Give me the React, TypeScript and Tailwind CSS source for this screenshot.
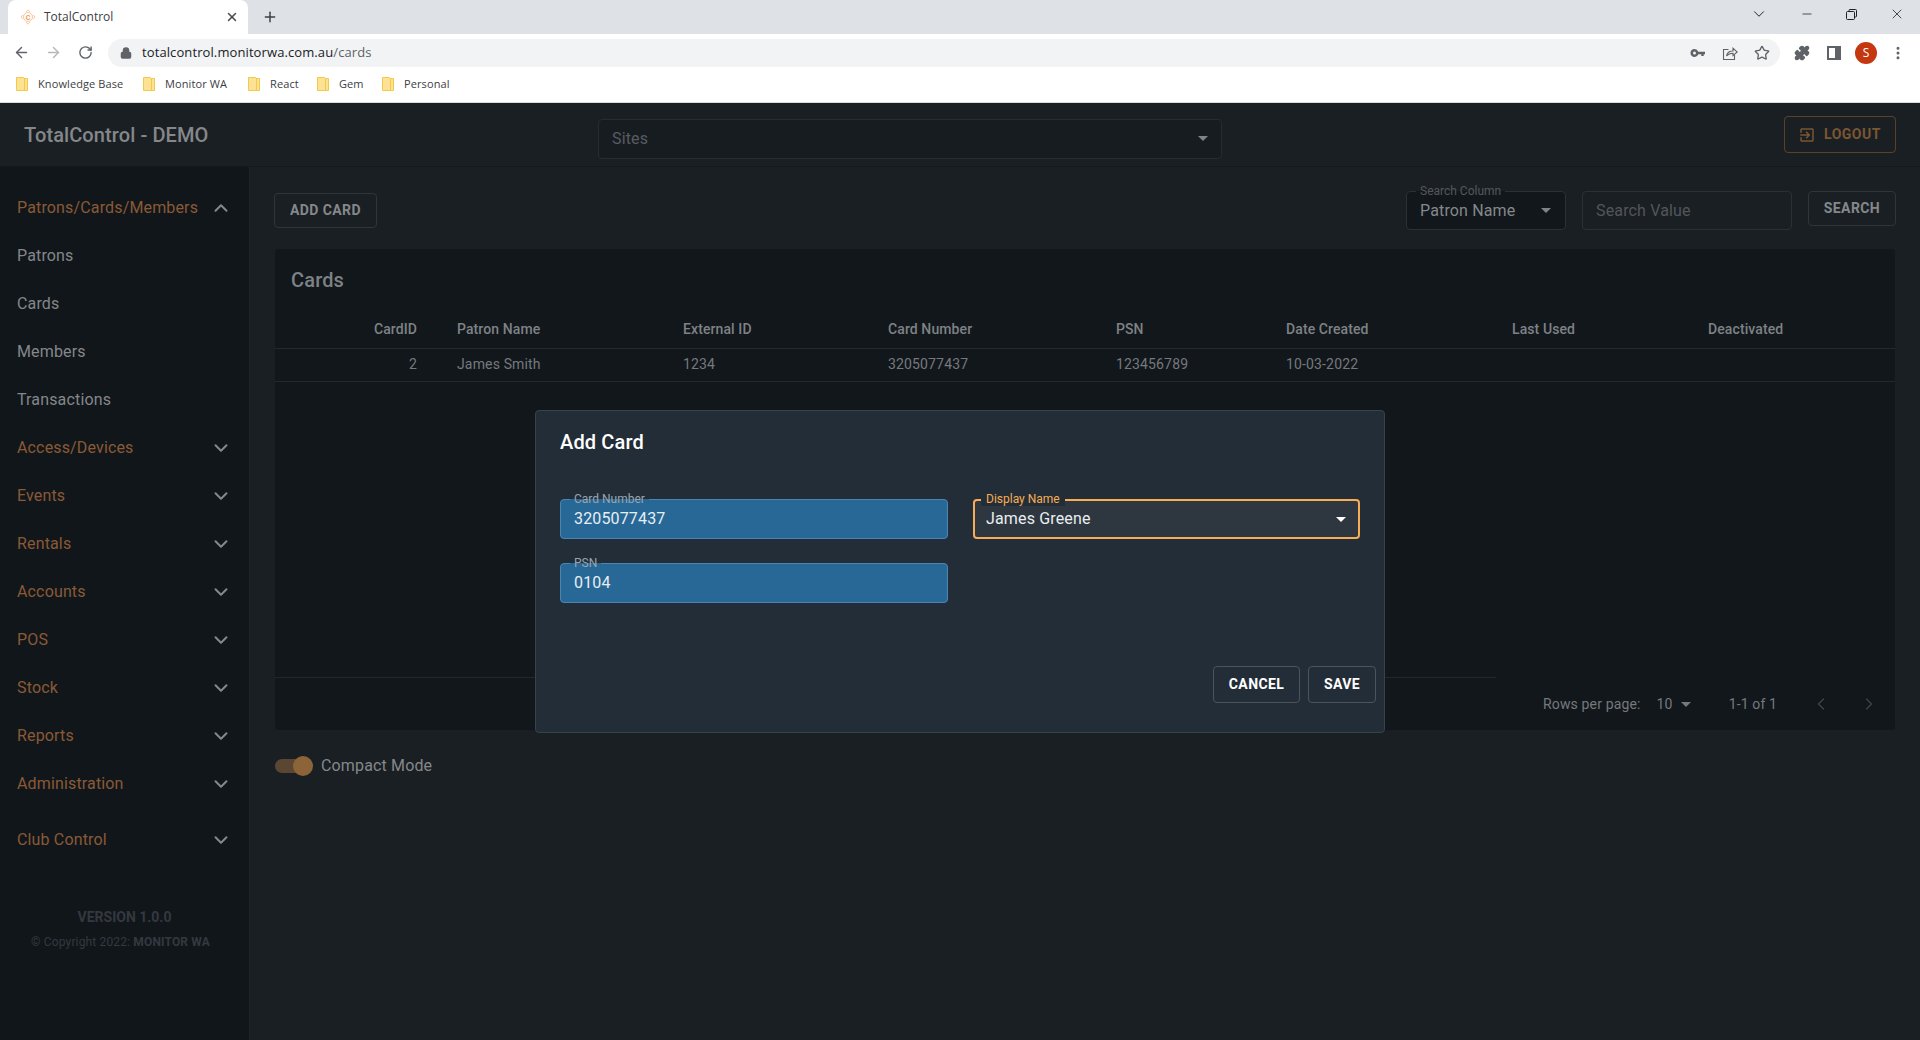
import React from "react";
import { ArrowLeft, ArrowRight, RotateCw, Lock, Star, ChevronUp, ChevronDown, ChevronLeft, ChevronRight, Plus, X, Minus, EllipsisVertical, Puzzle } from "lucide-react";

const Caret = ({ className = "" }: { className?: string }) => (
  <svg width="10" height="5" viewBox="0 0 10 5" className={className}><path d="M0 0l5 5 5-5z" fill="currentColor" /></svg>
);

const Folder = () => (
  <svg width="12" height="14" viewBox="0 0 12 14" className="shrink-0">
    <path d="M.5.5h7l1 1v12h-8z M8.5 1.5h3v12h-3z" fill="#fde293" stroke="#f2c94c" strokeWidth="1" />
  </svg>
);

const Favicon = () => (
  <svg width="16" height="16" viewBox="0 0 16 16" fill="none" stroke="#f8c9a0" strokeWidth="1">
    <circle cx="8" cy="8" r="4.5" />
    <path d="M8 .8l2 2.2M8 .8L6 3M8 15.2l2-2.2M8 15.2L6 13M.8 8L3 6M.8 8L3 10M15.2 8L13 6M15.2 8L13 10" />
    <text x="8" y="10.5" textAnchor="middle" fontSize="7" fontWeight="700" fill="#ee9a4d" stroke="none" fontFamily="Roboto">C</text>
  </svg>
);

const KeyIcon = () => (
  <svg width="16" height="16" viewBox="0 0 16 16" fill="#5f6368">
    <path fillRule="evenodd" d="M4.5 4a4 4 0 013.8 2.7H15v2.6h-1.3V11h-2.4V9.3H8.300A4 4 0 114.500 4zm0 2.500a1.500 1.500 0 100 3 1.500 1.500 0 000-3z" />
  </svg>
);

const ShareIcon = () => (
  <svg width="16" height="16" viewBox="0 0 16 16" fill="none" stroke="#5f6368" strokeWidth="1.100">
    <path d="M6.500 4.500H1.500v10h11V10" />
    <path d="M4.500 11c.6-3.200 3-5 6.500-5V3.200L15.200 7 11 10.600V8.200c-2.700 0-4.900.8-6.500 2.800z" />
  </svg>
);

const bookmarks = [
  ["Knowledge Base", "w-[127px]"],
  ["Monitor WA", "w-[105px]"],
  ["React", "w-[69px]"],
  ["Gem", "w-[65px]"],
  ["Personal", "w-[80px]"],
];

function BrowserChrome() {
  return (
    <div className="shrink-0 font-['Open_Sans','Noto_Sans',sans-serif] text-[#3c4043]">
      <div className="h-[34px] bg-[#dee1e6] flex items-end pl-2">
        <div className="w-[240px] h-[34px] bg-white rounded-t-lg flex items-center pl-3 pr-[9px]">
          <Favicon />
          <span className="ml-[8px] text-[12px] flex-1 text-[#3c4043]">TotalControl</span>
          <X size={14} strokeWidth={2.5} className="text-[#45484c]" />
        </div>
        <Plus size={16} strokeWidth={2.2} className="ml-[14px] mb-[9px] text-[#3c4043]" />
        <div className="ml-auto h-[28px] self-start flex items-center text-[#202124]">
          <ChevronDown size={18} strokeWidth={1.3} className="mr-[32px]" />
          <Minus size={14} strokeWidth={1.3} className="mr-[32px]" />
          <svg width="11" height="11" viewBox="0 0 11 11" fill="none" stroke="#202124" className="mr-[32px]"><rect x=".5" y="2.5" width="8" height="8" rx="1" /><path d="M3 2.500V1.500a1 1 0 011-1h5.500a1 1 0 011 1V7a1 1 0 01-1 1h-1" /></svg>
          <X size={16} strokeWidth={1.2} className="mr-[15px]" />
        </div>
      </div>
      <div className="h-[37px] bg-white flex items-center">
        <ArrowLeft size={17} strokeWidth={2} className="ml-[13px] text-[#5f6368]" />
        <ArrowRight size={17} strokeWidth={2} className="ml-[15px] text-[#b5b8bb]" />
        <RotateCw size={15} strokeWidth={2.2} className="ml-[16px] text-[#5f6368]" />
        <div className="ml-[15px] w-[1672px] h-[28px] rounded-full bg-[#f1f3f4] flex items-center pl-3 pr-[10px]">
          <Lock size={12} strokeWidth={3} className="text-[#5f6368] fill-[#5f6368]" />
          <span className="ml-[10px] text-[13px] text-[#202124] tracking-[0.1px]">totalcontrol.monitorwa.com.au<span className="text-[#5f6368]">/cards</span></span>
          <div className="ml-auto flex items-center gap-[16px] text-[#5f6368]">
            <KeyIcon />
            <ShareIcon />
            <Star size={16} strokeWidth={2} />
          </div>
        </div>
        <Puzzle size={16} className="ml-[14px] text-[#5f6368] fill-[#5f6368]" />
        <svg width="14" height="14" viewBox="0 0 14 14" className="ml-[17px]"><rect x="1" y="1" width="12" height="12" fill="none" stroke="#5f6368" strokeWidth="2" /><rect x="8" y="1" width="5" height="12" fill="#5f6368" /></svg>
        <div className="ml-[14px] w-[22px] h-[22px] rounded-full bg-[#c5370e] text-white text-[12px] flex items-center justify-center">S</div>
        <EllipsisVertical size={16} strokeWidth={2.5} className="ml-[13px] text-[#5f6368]" />
      </div>
      <div className="h-[32px] bg-white border-b border-[#d8dadd] flex items-center pl-[16px] pb-[5px] text-[11px] tracking-[0.1px] text-[#3c4043]">
        {bookmarks.map(([b, w]) => (
          <div key={b} className={`${w} flex items-center gap-[10px]`}>
            <Folder />
            <span>{b}</span>
          </div>
        ))}
      </div>
    </div>
  );
}

const navTop = ["Patrons", "Cards", "Members", "Transactions"];
const navGroups = ["Access/Devices", "Events", "Rentals", "Accounts", "POS", "Stock", "Reports", "Administration"];

function NavRow({ label, kind }: { label: string; kind: "open" | "group" | "leaf" }) {
  return (
    <div className={`h-12 flex items-center justify-between pl-[17px] pr-[17px] text-[16px] tracking-[0.15px] ${kind === "leaf" ? "text-[#84878a]" : "text-[#8a5a36]"}`}>
      <span>{label}</span>
      {kind === "open" && <ChevronUp size={22} strokeWidth={2.2} className="text-[#85888b]" />}
      {kind === "group" && <ChevronDown size={22} strokeWidth={2.2} className="text-[#85888b]" />}
    </div>
  );
}

function Sidebar() {
  return (
    <aside className="w-[250px] shrink-0 bg-[#11161b] border-r border-[#1e2429] pt-[17px]">
      <NavRow label="Patrons/Cards/Members" kind="open" />
      {navTop.map((n) => <NavRow key={n} label={n} kind="leaf" />)}
      {navGroups.map((n) => <NavRow key={n} label={n} kind="group" />)}
      <div className="mt-2"><NavRow label="Club Control" kind="group" /></div>
      <div className="mt-[43px] text-center text-[#33393f]">
        <div className="text-[14px] font-bold leading-[20px]">VERSION 1.0.0</div>
        <div className="mt-[6px] pr-[8px] text-[12px] leading-[18px] tracking-[0.15px]">© Copyright 2022: <b>MONITOR WA</b></div>
      </div>
    </aside>
  );
}

const columns = "grid grid-cols-[142px_40px_226px_205px_228px_170px_226px_196px_1fr]";

function CardsTable() {
  return (
    <div className="mt-[18px] h-[483px] bg-[#12171c] border border-[#191f24] rounded flex flex-col">
      <div className="h-[99px] shrink-0 flex flex-col">
        <div className="pl-[16px] pt-[17px] text-[20px] font-medium leading-[28px] tracking-[0.15px] text-[#7e8285]">Cards</div>
        <div className={`${columns} mt-[25px] text-[14px] font-medium leading-[20px] tracking-[0.1px] text-[#7e8285]`}>
          <span className="text-right">CardID</span><span />
          <span>Patron Name</span><span>External ID</span><span>Card Number</span><span>PSN</span><span>Date Created</span><span>Last Used</span><span>Deactivated</span>
        </div>
      </div>
      <div className={`${columns} h-[34px] shrink-0 items-center border-y border-[#24292d] pb-[1px] text-[14px] tracking-[0.15px] text-[#75797c]`}>
        <span className="text-right">2</span><span />
        <span>James Smith</span><span>1234</span><span>3205077437</span><span>123456789</span><span>10-03-2022</span><span /><span />
      </div>
      <div className="flex-1 mr-[399px] border-b border-[#262626]" />
      <div className="h-[52px] shrink-0 flex items-center text-[14px] tracking-[0.15px] text-[#75797c] pl-[1268px]">
        <span>Rows per page:</span>
        <span className="ml-[16px]">10</span>
        <Caret className="ml-[8px] text-[#75797c]" />
        <span className="ml-[38px]">1-1 of 1</span>
        <ChevronLeft size={20} strokeWidth={1.5} className="ml-[34px] text-[#40454a]" />
        <ChevronRight size={20} strokeWidth={1.5} className="ml-[28px] text-[#40454a]" />
      </div>
    </div>
  );
}

function Field({ label, value }: { label: string; value: string }) {
  return (
    <div className="relative h-[40px] w-[388px] rounded bg-[#276897] border border-[#4b86b3] flex items-center pl-[13px] text-[16px] tracking-[0.15px] text-[#e9eef2]">
      <span className="absolute -top-[8px] left-[9px] px-[4px] h-[14px] leading-[14px] text-[12px] tracking-normal text-[#9aa5ad] bg-[linear-gradient(#232d37_50%,#276897_50%)]">{label}</span>
      {value}
    </div>
  );
}

function Dialog() {
  return (
    <div className="absolute left-[535px] top-[410px] w-[850px] h-[323px] bg-[#232d37] border border-[#39424c] rounded px-[24px] pt-[17px] flex flex-col">
      <div className="text-[20px] font-medium leading-[28px] tracking-[0.15px] text-white">Add Card</div>
      <div className="mt-[43px] flex items-start gap-[25px]">
        <div className="flex flex-col gap-[24px]">
          <Field label="Card Number" value="3205077437" />
          <Field label="PSN" value="0104" />
        </div>
        <div className="relative h-[40px] w-[387px] rounded bg-[#2e3740] border-2 border-[#f6ad55] flex items-center pl-[11px] pr-[12px] justify-between text-[16px] tracking-[0.15px] text-[#e9eef2]">
          <span className="absolute -top-[9px] left-[6px] px-[5px] h-[14px] leading-[14px] text-[12px] tracking-normal text-[#f6ad55] bg-[#232d37]">Display Name</span>
          James Greene
          <Caret className="text-white" />
        </div>
      </div>
      <div className="mt-auto mb-[29px] -mr-[16px] flex justify-end gap-[8px] text-[14px] font-bold text-white">
        <div className="h-[37px] w-[87px] border border-[#4b545d] rounded flex items-center justify-center tracking-[0.4px]">CANCEL</div>
        <div className="h-[37px] w-[68px] border border-[#4b545d] rounded flex items-center justify-center tracking-[0.4px]">SAVE</div>
      </div>
    </div>
  );
}

export default function App() {
  return (
    <div className="h-screen w-full overflow-hidden flex flex-col font-['Roboto',sans-serif] relative">
      <BrowserChrome />
      <header className="h-[64px] shrink-0 bg-[#1a1f24] border-b border-[#14181c] flex items-center pl-[24px] pr-[24px]">
        <div className="w-[574px] text-[20px] font-medium tracking-[0.1px] text-[#85888a]">TotalControl - DEMO</div>
        <div className="w-[624px] h-[40px] mt-[8px] bg-[#171c20] border border-[#262c31] rounded flex items-center justify-between pl-[13px] pr-[13px] text-[16px] tracking-[0.15px] text-[#585c60]">
          Sites
          <Caret className="text-[#80848a]" />
        </div>
        <div className="ml-auto h-[37px] w-[112px] border border-[#5a4229] rounded flex items-center pl-[13px] gap-[8px] text-[14px] font-bold tracking-[0.5px] text-[#7a5631]">
          <svg width="18" height="18" viewBox="0 0 24 24" fill="currentColor"><path d="M10.090 15.590L11.500 17l5-5-5-5-1.410 1.410L12.670 11H3v2h9.670l-2.580 2.590zM19 3H5c-1.110 0-2 .9-2 2v4h2V5h14v14H5v-4H3v4c0 1.100.89 2 2 2h14c1.100 0 2-.9 2-2V5c0-1.100-.9-2-2-2z" /></svg>
          LOGOUT
        </div>
      </header>
      <div className="flex-1 flex min-h-0">
        <Sidebar />
        <main className="flex-1 bg-[#1a1f24] pl-[24px] pr-[24px] pt-[24px]">
          <div className="flex items-start">
            <div className="mt-[2px] h-[35px] w-[103px] border border-[#2f353a] rounded flex items-center justify-center text-[14px] font-bold tracking-[0.4px] text-[#85888a]">ADD CARD</div>
            <div className="relative ml-auto w-[160px] h-[39px] bg-[#12171c] border border-[#2a3035] rounded flex items-center justify-between pl-[13px] pr-[14px] text-[16px] tracking-[0.15px] text-[#85888a]">
              <span className="absolute -top-[8px] left-[9px] px-[4px] h-[14px] leading-[14px] text-[12px] tracking-normal text-[#54585c] bg-[linear-gradient(#1a1f24_50%,#12171c_50%)]">Search Column</span>
              Patron Name
              <Caret className="text-[#80848a]" />
            </div>
            <div className="ml-[16px] w-[210px] h-[39px] border border-[#2a3035] rounded flex items-center pl-[13px] text-[16px] tracking-[0.15px] text-[#52565a]">Search Value</div>
            <div className="ml-[16px] w-[88px] h-[35px] border border-[#2f353a] rounded flex items-center justify-center text-[14px] font-bold tracking-[0.4px] text-[#85888a]">SEARCH</div>
          </div>
          <CardsTable />
          <div className="mt-[23px] flex items-center">
            <div className="relative w-[38px] h-[20px] ml-[1px]">
              <div className="absolute left-0 top-[3px] w-[36px] h-[14px] rounded-full bg-[#5a4632]" />
              <div className="absolute right-0 top-0 w-[20px] h-[20px] rounded-full bg-[#8d6439]" />
            </div>
            <span className="ml-[8px] text-[16px] tracking-[0.15px] text-[#85888a]">Compact Mode</span>
          </div>
        </main>
      </div>
      <Dialog />
    </div>
  );
}
